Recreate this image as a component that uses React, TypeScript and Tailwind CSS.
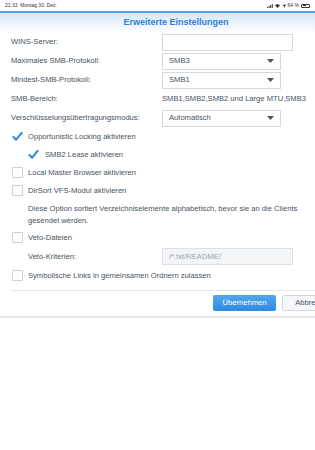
import React from "react";

const Check = () => (
  <svg width="12" height="11" viewBox="0 0 12 11" className="block">
    <path d="M1.5 6 L4.5 9 L10.5 1.5" fill="none" stroke="#2b8ae3" strokeWidth="2.2" strokeLinecap="round" strokeLinejoin="round" />
  </svg>
);

const Box = ({ checked }: { checked?: boolean }) =>
  checked ? (
    <div className="w-[11px] h-[11px] flex items-center justify-center">
      <Check />
    </div>
  ) : (
    <div className="w-[11px] h-[11px] border border-[#cbd0d6] rounded-[1px] bg-white" />
  );

const Arrow = () => (
  <svg width="7" height="4" viewBox="0 0 7 4" className="block">
    <path d="M0 0 L7 0 L3.5 4 Z" fill="#4a5560" />
  </svg>
);

const Select = ({ value }: { value: string }) => (
  <div className="w-[119px] h-[17px] border border-[#d4d9de] bg-white flex items-center justify-between pl-[6px] pr-[6px]">
    <span>{value}</span>
    <Arrow />
  </div>
);

const Row = ({ label, children }: { label: string; children?: React.ReactNode }) => (
  <div className="h-[19px] flex items-center">
    <div className="w-[162px] shrink-0 pl-[11px]">{label}</div>
    <div className="flex-1">{children}</div>
  </div>
);

const CheckRow = ({ label, checked, indent }: { label: string; checked?: boolean; indent?: boolean }) => (
  <div className={`h-[18px] flex items-center ${indent ? "pl-[28px]" : "pl-[12px]"}`}>
    <Box checked={checked} />
    <span className={indent ? "ml-[6px]" : "ml-[5px]"}>{label}</span>
  </div>
);

export default function App() {
  return (
    <div
      className="w-[315px] h-[450px] overflow-hidden bg-white relative"
      style={{ fontFamily: '"Liberation Sans", Arial, sans-serif' }}
    >
      {/* status bar */}
      <div className="h-[11px] flex items-center justify-between px-[5px] text-[5px] text-[#333] bg-white">
        <span>21:33&nbsp;&nbsp;Montag 30. Dez.</span>
        <div className="flex items-center gap-[2px]">
          <svg width="6" height="4" viewBox="0 0 6 4">
            <rect x="0" y="3" width="1" height="1" fill="#333" />
            <rect x="1.6" y="2" width="1" height="2" fill="#333" />
            <rect x="3.2" y="1" width="1" height="3" fill="#333" />
            <rect x="4.8" y="0" width="1" height="4" fill="#333" />
          </svg>
          <svg width="5" height="4" viewBox="0 0 5 4">
            <path d="M0 1.3 Q2.5 -0.8 5 1.3 L2.5 4 Z" fill="#333" />
          </svg>
          <svg width="4" height="4" viewBox="0 0 4 4">
            <path d="M4 0 L0 1.7 L2 2 L2.3 4 Z" fill="#333" />
          </svg>
          <span>64 %</span>
          <div className="w-[9px] h-[4px] border border-[#333] rounded-[1px] p-[0.5px] flex">
            <div className="w-[60%] bg-[#333]" />
          </div>
        </div>
      </div>

      <div className="w-[352px] text-[7.6px] text-[#47525d]">
        {/* header */}
        <div className="h-[1.5px] bg-[#5b9ee6]" />
        <div className="h-[20px] flex items-center justify-center bg-gradient-to-b from-[#d6e7f8] to-white">
          <span className="text-[9px] font-bold text-[#2f7fd4]">Erweiterte Einstellungen</span>
        </div>

        <Row label="WINS-Server:">
          <div className="w-[131px] h-[17px] border border-[#d4d9de] bg-white" />
        </Row>
        <Row label="Maximales SMB-Protokoll:">
          <Select value="SMB3" />
        </Row>
        <Row label="Mindest-SMB-Protokoll:">
          <Select value="SMB1" />
        </Row>
        <Row label="SMB-Bereich:">
          <span>SMB1,SMB2,SMB2 und Large MTU,SMB3</span>
        </Row>
        <Row label="Verschlüsselungsübertragungsmodus:">
          <Select value="Automatisch" />
        </Row>

        <CheckRow label="Opportunistic Locking aktivieren" checked />
        <CheckRow label="SMB2 Lease aktivieren" checked indent />
        <CheckRow label="Local Master Browser aktivieren" />
        <CheckRow label="DirSort VFS-Modul aktivieren" />

        <div className="pl-[28px] pr-[40px] pt-[3px] leading-[12px]">
          Diese Option sortiert Verzeichniselemente alphabetisch, bevor sie an die Clients gesendet werden.
        </div>

        <div className="mt-[2px]">
          <CheckRow label="Veto-Dateien" />
        </div>
        <div className="h-[20px] flex items-center">
          <div className="w-[162px] shrink-0 pl-[28px]">Veto-Kriterien:</div>
          <div className="w-[131px] h-[17px] border border-[#dde1e5] bg-[#f3f5f7] flex items-center pl-[6px] text-[#9aa3ab]">
            /*.txt/README/
          </div>
        </div>
        <CheckRow label="Symbolische Links in gemeinsamen Ordnern zulassen" />

        <div className="ml-[11px] mt-[5px] h-px bg-[#e3e6e9]" />

        <div className="h-[25px] flex items-center justify-end pr-[7px] gap-[6px]">
          <div className="w-[63px] h-[16px] rounded-[2px] bg-gradient-to-b from-[#52a8ec] to-[#2d8ae0] text-white flex items-center justify-center">
            Übernehmen
          </div>
          <div className="w-[63px] h-[16px] rounded-[2px] border border-[#d2d7dc] bg-[#f6f7f8] flex items-center justify-center">
            Abbrechen
          </div>
        </div>
        <div className="h-[2px] bg-[#e6e7e8]" />
      </div>
    </div>
  );
}
